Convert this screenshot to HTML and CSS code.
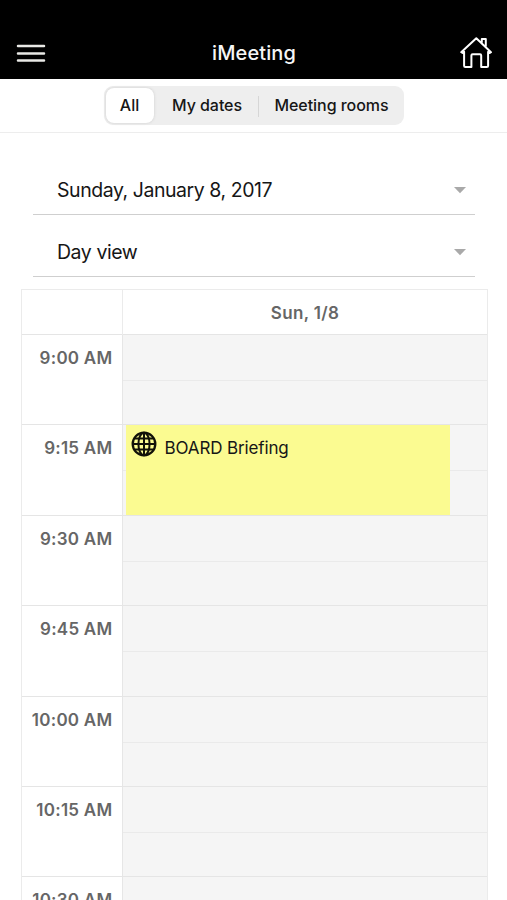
FILE: index.html
```html
<!DOCTYPE html>
<html lang="en">
<head>
<meta charset="utf-8">
<title>iMeeting</title>
<link rel="stylesheet" href="styles.css">
</head>
<body>
<header class="topbar">
  <button class="icon-button menu" aria-label="Menu"><svg width="30" height="20" viewBox="0 0 30 20"><path d="M2 2H28M2 9.4H28M2 16.6H28" stroke="#e9e9e6" stroke-width="2.5" stroke-linecap="round"/></svg></button>
  <h1 class="title">iMeeting</h1>
  <button class="icon-button home" aria-label="Home"><svg width="34" height="34" viewBox="0 0 34 34" fill="none" stroke="#fff" stroke-width="2" stroke-linejoin="round" stroke-linecap="round"><path d="M2.2 16.2L17.3 2.2L32 16.2L30.5 17L29.1 15.8V29.8Q29.1 31 27.9 31H22.2V19.4Q22.2 18.2 21 18.2H13.6Q12.4 18.2 12.4 19.4V31H6.3Q5.1 31 5.1 29.8V15.8L3.6 17ZM22.8 6.2V2.9H26.8V10.2"/></svg></button>
</header>
<nav class="filters">
  <div class="segments">
    <button class="segment active">All</button>
    <button class="segment dates">My dates</button>
    <button class="segment rooms">Meeting rooms</button>
  </div>
</nav>
<main>
  <div class="selects">
    <div class="select"><span>Sunday, January 8, 2017</span><svg width="12" height="7" viewBox="0 0 12 7"><path d="M0 0H12L6 6.3Z" fill="#a9a9a9"/></svg></div>
    <div class="select"><span>Day view</span><svg width="12" height="7" viewBox="0 0 12 7"><path d="M0 0H12L6 6.3Z" fill="#a9a9a9"/></svg></div>
  </div>
  <section class="calendar">
    <div class="head"><div></div><div class="day">Sun, 1/8</div></div>
    <div class="row"><div class="time">9:00 AM</div><div class="slot"></div></div>
    <div class="row"><div class="time">9:15 AM</div><div class="slot">
      <div class="event"><svg width="26" height="26" viewBox="0 0 26 26" fill="none" stroke="#111108" stroke-width="2"><circle cx="13" cy="13" r="11.3" stroke-width="2.3"/><ellipse cx="13" cy="13" rx="5.6" ry="11.3"/><path d="M13 2V24M2 13H24M3.8 7.5H22.2M3.8 18.5H22.2"/></svg><span>BOARD Briefing</span></div>
    </div></div>
    <div class="row"><div class="time">9:30 AM</div><div class="slot"></div></div>
    <div class="row"><div class="time">9:45 AM</div><div class="slot"></div></div>
    <div class="row"><div class="time">10:00 AM</div><div class="slot"></div></div>
    <div class="row"><div class="time">10:15 AM</div><div class="slot"></div></div>
    <div class="row last"><div class="time">10:30 AM</div><div class="slot"></div></div>
  </section>
</main>
</body>
</html>
```
FILE: styles.css
```css
* { box-sizing: border-box; }
body {
  margin: 0;
  height: 900px;
  overflow: hidden;
  background: #fff;
  color: #161616;
  font-family: Inter, "Liberation Sans", sans-serif;
}
button { border: 0; padding: 0; background: none; font: inherit; color: inherit; }
svg { display: block; flex: none; }
.topbar {
  height: 79px;
  padding: 26px 14px 0 16px;
  display: grid;
  grid-template-columns: 34px 1fr 34px;
  align-items: center;
  background: #000;
  color: #f6f6f6;
}
.icon-button { width: 34px; }
.menu { padding-top: 2px; }
.title { margin: 0 1px 0 0; font-size: 20px; line-height: 24px; font-weight: 500; text-align: center; letter-spacing: .12px; }
.filters { height: 54px; padding-top: 7px; border-bottom: 1px solid #ededed; display: flex; justify-content: center; }
.segments {
  width: 300px;
  height: 39px;
  padding: 2px;
  display: flex;
  background: #eee;
  border-radius: 9px;
  font-size: 16px;
  font-weight: 500;
}
.segment { height: 35px; line-height: 33px; text-align: center; white-space: nowrap; }
.active { width: 48px; background: #fff; border-radius: 8px; box-shadow: 0 0 3px #ccc; }
.dates { width: 104px; padding-left: 3px; letter-spacing: -.05px; }
.rooms { flex: 1; position: relative; padding-left: 4px; letter-spacing: -.05px; }
.rooms::before { content: ""; position: absolute; left: 0; top: 8px; width: 1px; height: 21px; background: #d6d6d6; }
.selects { padding: 20px 32px 0 33px; }
.select { height: 62px; padding: 13px 9px 0 24px; display: flex; align-items: center; justify-content: space-between; border-bottom: 1px solid #cfcfcf; font-size: 19.5px; letter-spacing: -.45px; }
.calendar {
  height: 611px;
  overflow: hidden;
  margin: 12px 19px 0 21px;
  border: 1px solid #ebebeb;
  border-bottom: 0;
}
.head, .row { display: grid; grid-template-columns: 100px 1fr; }
.head { height: 45px; border-bottom: 1px solid #e5e5e5; }
.day { border-left: 1px solid #ebebeb; padding-top: 1px; line-height: 45px; text-align: center; font-size: 17px; font-weight: 600; letter-spacing: .35px; color: #666; }
.row { height: 90.4px; border-bottom: 1px solid #e5e5e5; }
.last { height: 23px; border-bottom: 0; }
.time { padding: 12px 9.6px 0 0; text-align: right; font-size: 17px; line-height: 22px; font-weight: 600; letter-spacing: .25px; color: #666; }
.slot { background: linear-gradient(#eaeaea, #eaeaea) 0 45px / 100% 1px no-repeat #f5f5f5; border-left: 1px solid #e6e6e6; padding-left: 3px; }
.event { width: 324px; height: 89.4px; padding: 6px 0 0 4.5px; display: flex; align-items: flex-start; gap: 8px; background: #fbfb91; font-size: 17px; letter-spacing: -.13px; }
.event span { line-height: 35px; }
```
